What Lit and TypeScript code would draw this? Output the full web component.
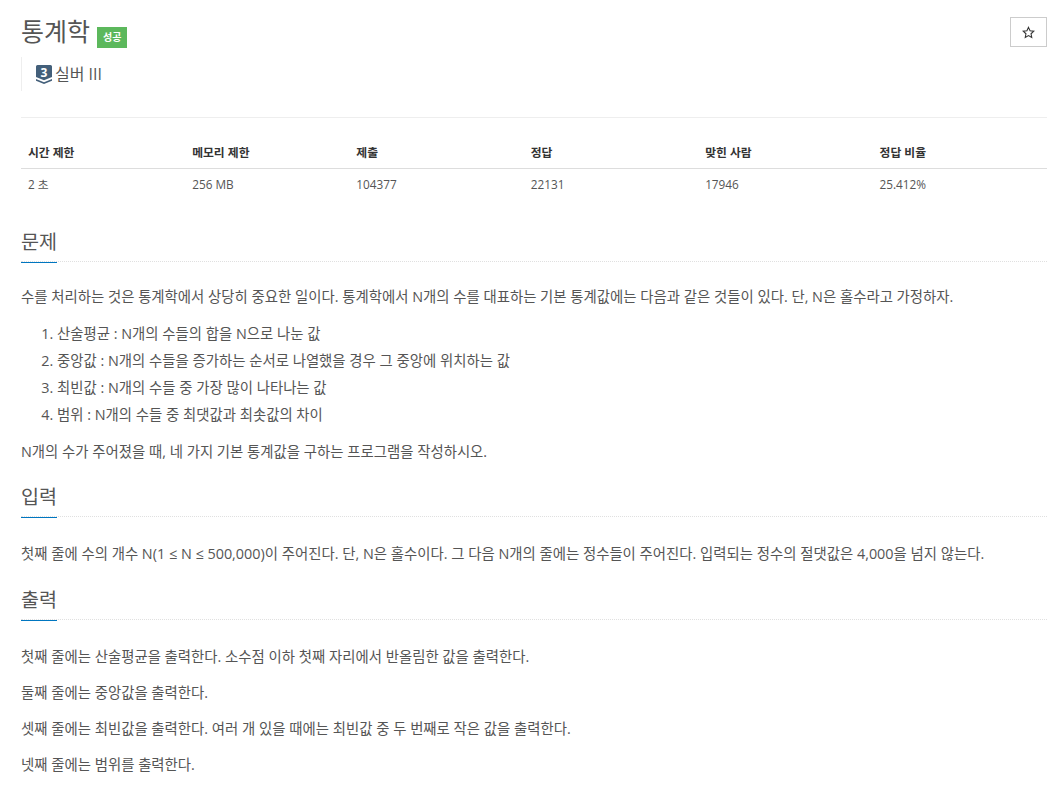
import { LitElement, html, css } from 'lit';
import { customElement } from 'lit/decorators.js';

const stats = [
  ['시간 제한', '2 초'],
  ['메모리 제한', '256 MB'],
  ['제출', '104377'],
  ['정답', '22131'],
  ['맞힌 사람', '17946'],
  ['정답 비율', '25.412%'],
];

@customElement('app-root')
export class AppRoot extends LitElement {
  static styles = css`
    :host {
      display: block;
      box-sizing: border-box;
      width: 1054px;
      height: 786px;
      overflow: hidden;
      padding: 0 7px 0 21px;
      background: #fff;
      color: #555;
      font-family: 'Open Sans', 'Noto Sans CJK KR', sans-serif;
      font-size: 14.4px;
      line-height: 18px;
    }
    .title-row {
      display: flex;
      justify-content: space-between;
      align-items: flex-start;
      padding-top: 17px;
    }
    h1 {
      display: flex;
      align-items: flex-start;
      gap: 7px;
      height: 30px;
      margin: 0;
      font-size: 25px;
      font-weight: 400;
      line-height: 28px;
      color: #555;
    }
    .badge {
      margin-top: 10px;
      padding: 0 6px;
      background: #5cb85c;
      color: #fff;
      font-size: 10px;
      font-weight: 700;
      line-height: 21px;
    }
    .star {
      display: flex;
      align-items: center;
      justify-content: center;
      box-sizing: border-box;
      width: 37px;
      height: 30px;
      border: 1px solid #ccc;
      background: #fff;
      color: #333;
    }
    .tier {
      display: flex;
      align-items: center;
      gap: 3px;
      box-sizing: border-box;
      margin-top: 10px;
      height: 34px;
      padding: 0 0 1px 14px;
      border-left: 1px solid #eee;
      font-size: 16px;
      color: #555;
    }
    .tier svg {
      margin-top: 1px;
    }
    hr {
      margin: 26px 0 0;
      border: 0;
      border-top: 1px solid #eee;
    }
    table {
      width: 100%;
      margin-top: 17px;
      border-collapse: collapse;
      table-layout: fixed;
      font-size: 11.8px;
    }
    th {
      padding: 8px 7px 7px;
      height: 18px;
      text-align: left;
      font-weight: 700;
      color: #333;
      border-bottom: 1px solid #ddd;
    }
    td {
      padding: 6px 7px;
      height: 18px;
      color: #555;
    }
    .section h2 {
      margin: 0;
      padding-bottom: 5px;
      border-bottom: 1px dotted #e0e0e0;
      font-size: 19.6px;
      font-weight: 400;
      line-height: 28px;
      color: #555;
    }
    .section h2 span {
      display: inline-block;
      position: relative;
    }
    .section h2 span::after {
      content: '';
      position: absolute;
      left: 0;
      right: 0;
      bottom: -7px;
      height: 1px;
      background: #0076c0;
    }
    .section.problem { margin-top: 29px; }
    .section.input { margin-top: 22px; }
    .section.output { margin-top: 23px; }
    p {
      margin: 0 0 18px;
      line-height: 18px;
    }
    .body { padding-top: 28px; }
    .problem .body { padding-top: 26px; }
    ol {
      margin: -4px 0 15px;
      padding-left: 36px;
    }
    li {
      line-height: 27px;
    }
  `;

  render() {
    return html`
      <div class="title-row">
        <h1>통계학 <span class="badge">성공</span></h1>
        <div class="star">
          <svg width="13" height="13" viewBox="0 0 24 24" fill="none" stroke="currentColor" stroke-width="2">
            <path d="M12 2.5l2.9 6.3 6.8.8-5 4.7 1.3 6.8-6-3.4-6 3.4 1.3-6.8-5-4.7 6.8-.8z" />
          </svg>
        </div>
      </div>
      <div class="tier">
        <svg width="16" height="19" viewBox="0 0 16 19">
          <path d="M1.5 0h13a1.5 1.5 0 0 1 1.5 1.5v10.5l-8 3.2-8-3.2v-10.5a1.5 1.5 0 0 1 1.5-1.5z" fill="#435f7a" />
          <path d="M0 14l8 3.2 8-3.2v1.8l-8 3.2-8-3.2z" fill="#435f7a" />
          <text x="8" y="11.5" text-anchor="middle" font-size="12" font-weight="700" fill="#fff">3</text>
        </svg>
        <span>실버 III</span>
      </div>
      <hr />
      <table>
        <colgroup>
          <col style="width:16%" /><col style="width:16%" /><col style="width:17%" />
          <col style="width:17%" /><col style="width:17%" /><col style="width:17%" />
        </colgroup>
        <thead>
          <tr>${stats.map((s) => html`<th>${s[0]}</th>`)}</tr>
        </thead>
        <tbody>
          <tr>${stats.map((s) => html`<td>${s[1]}</td>`)}</tr>
        </tbody>
      </table>

      <section class="section problem">
        <h2><span>문제</span></h2>
        <div class="body">
          <p>수를 처리하는 것은 통계학에서 상당히 중요한 일이다. 통계학에서 N개의 수를 대표하는 기본 통계값에는 다음과 같은 것들이 있다. 단, N은 홀수라고 가정하자.</p>
          <ol>
            <li>산술평균 : N개의 수들의 합을 N으로 나눈 값</li>
            <li>중앙값 : N개의 수들을 증가하는 순서로 나열했을 경우 그 중앙에 위치하는 값</li>
            <li>최빈값 : N개의 수들 중 가장 많이 나타나는 값</li>
            <li>범위 : N개의 수들 중 최댓값과 최솟값의 차이</li>
          </ol>
          <p>N개의 수가 주어졌을 때, 네 가지 기본 통계값을 구하는 프로그램을 작성하시오.</p>
        </div>
      </section>

      <section class="section input">
        <h2><span>입력</span></h2>
        <div class="body">
          <p>첫째 줄에 수의 개수 N(1 ≤ N ≤ 500,000)이 주어진다. 단, N은 홀수이다. 그 다음 N개의 줄에는 정수들이 주어진다. 입력되는 정수의 절댓값은 4,000을 넘지 않는다.</p>
        </div>
      </section>

      <section class="section output">
        <h2><span>출력</span></h2>
        <div class="body">
          <p>첫째 줄에는 산술평균을 출력한다. 소수점 이하 첫째 자리에서 반올림한 값을 출력한다.</p>
          <p>둘째 줄에는 중앙값을 출력한다.</p>
          <p>셋째 줄에는 최빈값을 출력한다. 여러 개 있을 때에는 최빈값 중 두 번째로 작은 값을 출력한다.</p>
          <p>넷째 줄에는 범위를 출력한다.</p>
        </div>
      </section>
    `;
  }
}
